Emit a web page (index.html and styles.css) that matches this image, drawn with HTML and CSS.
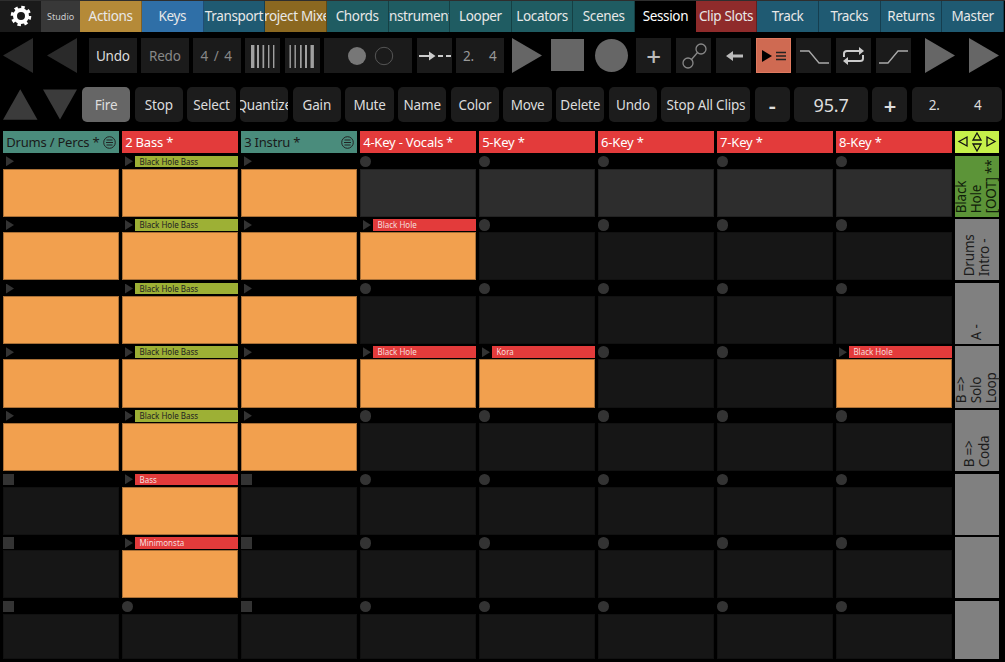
FILE: index.html
```html
<!DOCTYPE html>
<html lang="en">
<head>
  <meta charset="UTF-8">
  <meta name="viewport" content="width=device-width, initial-scale=1.0">
  <title>Session</title>
  <link rel="stylesheet" href="styles.css">
</head>
<body>
  <!-- Page tabs -->
  <div class="tabs">
    <div class="tab tab-gear">
      <svg width="22" height="22" viewBox="0 0 22 22">
        <circle cx="11" cy="11" r="6" fill="none" stroke="#fff" stroke-width="4"/>
        <circle cx="11" cy="11" r="8.8" fill="none" stroke="#fff" stroke-width="3" stroke-dasharray="3.450 3.460"/>
      </svg>
    </div>
    <div class="tab tab-studio">Studio</div>
    <div class="tab gold">Actions</div>
    <div class="tab blue">Keys</div>
    <div class="tab petrol">Transport</div>
    <div class="tab brown">Project Mixer</div>
    <div class="tab teal">Chords</div>
    <div class="tab teal">Instrument</div>
    <div class="tab teal">Looper</div>
    <div class="tab teal">Locators</div>
    <div class="tab teal">Scenes</div>
    <div class="tab current">Session</div>
    <div class="tab wine">Clip Slots</div>
    <div class="tab petrol">Track</div>
    <div class="tab petrol">Tracks</div>
    <div class="tab petrol">Returns</div>
    <div class="tab petrol">Master</div>
  </div>

  <!-- Transport row -->
  <div class="transport">
    <svg class="shape w30" viewBox="0 0 30 35"><polygon points="30,0 30,35 0,17.500" fill="#2a2a2a"/></svg>
    <svg class="shape w30 gap-back" viewBox="0 0 30 35"><polygon points="30,0 30,35 0,17.500" fill="#2a2a2a"/></svg>
    <div class="tbtn w48 gap-undo">Undo</div>
    <div class="tbtn w48 dim">Redo</div>
    <div class="tbtn w48 dim sig">4 / 4</div>
    <div class="tbtn w35">
      <svg width="35" height="35" viewBox="0 0 35 35" fill="#a0a0a0"><rect x="6" y="7" width="3.400" height="23"/><rect x="12" y="7" width="2" height="23"/><rect x="17.500" y="7" width="1.700" height="23"/><rect x="23" y="7" width="1.400" height="23"/><rect x="28" y="7" width="1.400" height="23"/></svg>
    </div>
    <div class="tbtn w35">
      <svg width="35" height="35" viewBox="0 0 35 35" fill="#a0a0a0"><rect x="4.500" y="7" width="1.400" height="23"/><rect x="9.500" y="7" width="1.400" height="23"/><rect x="15" y="7" width="1.700" height="23"/><rect x="20" y="7" width="2" height="23"/><rect x="25.500" y="7" width="3.400" height="23"/></svg>
    </div>
    <div class="tbtn w88">
      <svg width="88" height="35" viewBox="0 0 88 35"><circle cx="33" cy="18" r="9" fill="#777"/><circle cx="60" cy="18" r="8.700" fill="none" stroke="#555"/></svg>
    </div>
    <div class="tbtn w35">
      <svg width="35" height="35" viewBox="0 0 35 35" fill="#ccc"><path d="M2 17H12V13.500L18.500 18L12 22.500V19H2Z"/><path d="M21 17H26V19H21ZM29 17H34V19H29Z"/></svg>
    </div>
    <div class="tbtn w48 num"><span>2.</span><span>4</span></div>
    <svg class="shape w30 gap-play" viewBox="0 0 30 35"><polygon points="0,0 30,17.500 0,35" fill="#666"/></svg>
    <div class="stopshape"></div>
    <div class="recshape"></div>
    <div class="tbtn wide gap-plus plus">+</div>
    <div class="tbtn wide">
      <svg width="35" height="35" viewBox="0 0 35 35" fill="none" stroke="#888" stroke-width="1.300"><circle cx="12" cy="25" r="5"/><circle cx="25" cy="11" r="5"/><path d="M15.500 21.500L21.500 14.500"/></svg>
    </div>
    <div class="tbtn wide">
      <svg width="35" height="35" viewBox="0 0 35 35" fill="#bbb"><path d="M10 18L17 13V16.500H27V19.500H17V23Z"/></svg>
    </div>
    <div class="tbtn wide on">
      <svg width="35" height="35" viewBox="0 0 35 35"><polygon points="6,12 16,18 6,24" fill="#000"/><path d="M20 14.500H30M20 18H30M20 21.500H30" stroke="#222" stroke-width="1.400"/></svg>
    </div>
    <div class="tbtn wide">
      <svg width="35" height="35" viewBox="0 0 35 35" fill="none" stroke="#aaa" stroke-width="1.300"><path d="M4 13H13L23 25H33"/></svg>
    </div>
    <div class="tbtn wide">
      <svg width="35" height="35" viewBox="0 0 35 35" fill="none" stroke="#ccc" stroke-width="2"><path d="M8 19V15.500Q8 13 11 13H24"/><path d="M27 17V20.500Q27 23 24 23H11"/><path d="M23 9L28 13L23 17Z" fill="#ccc" stroke="none"/><path d="M12 19L7 23L12 27Z" fill="#ccc" stroke="none"/></svg>
    </div>
    <div class="tbtn wide">
      <svg width="35" height="35" viewBox="0 0 35 35" fill="none" stroke="#aaa" stroke-width="1.300"><path d="M3 25H12L22 13H32"/></svg>
    </div>
    <svg class="shape w30 gap-end" viewBox="0 0 30 35"><polygon points="0,0 30,17.500 0,35" fill="#666"/></svg>
    <svg class="shape w30 gap-end" viewBox="0 0 30 35"><polygon points="0,0 30,17.500 0,35" fill="#666"/></svg>
  </div>

  <!-- Action row -->
  <div class="actions">
    <svg class="arrow" viewBox="0 0 35 31"><polygon points="17.500,0 35,31 0,31" fill="#3b3b3b"/></svg>
    <svg class="arrow" viewBox="0 0 35 31"><polygon points="0,0 35,0 17.500,31" fill="#3b3b3b"/></svg>
    <div class="abtn fire">Fire</div>
    <div class="abtn">Stop</div>
    <div class="abtn">Select</div>
    <div class="abtn">Quantize</div>
    <div class="abtn">Gain</div>
    <div class="abtn">Mute</div>
    <div class="abtn">Name</div>
    <div class="abtn">Color</div>
    <div class="abtn">Move</div>
    <div class="abtn">Delete</div>
    <div class="abtn">Undo</div>
    <div class="abtn stopall">Stop All Clips</div>
    <div class="abtn step">-</div>
    <div class="abtn tempo">95.7</div>
    <div class="abtn step">+</div>
    <div class="abtn quant"><span>2.</span><span>4</span></div>
  </div>

  <!-- Clip matrix -->
  <div class="matrix">
    <div class="thead th-teal">Drums / Percs *
      <svg class="menu" width="13" height="13" viewBox="0 0 13 13" fill="none" stroke="#222"><circle cx="6.500" cy="6.500" r="5.800"/><path d="M3.500 4H9.500M3 6.500H10M3.500 9H9.500"/></svg>
    </div>
    <div class="thead th-red">2 Bass *</div>
    <div class="thead th-teal">3 Instru *
      <svg class="menu" width="13" height="13" viewBox="0 0 13 13" fill="none" stroke="#222"><circle cx="6.500" cy="6.500" r="5.800"/><path d="M3.500 4H9.500M3 6.500H10M3.500 9H9.500"/></svg>
    </div>
    <div class="thead th-red">4-Key - Vocals *</div>
    <div class="thead th-red">5-Key *</div>
    <div class="thead th-red">6-Key *</div>
    <div class="thead th-red">7-Key *</div>
    <div class="thead th-red">8-Key *</div>
    <div class="navpad">
      <svg width="44" height="22" viewBox="0 0 44 22" fill="none" stroke="#111" stroke-width="1.300"><path d="M12 6V15L4 10.500Z"/><path d="M22 2L26 9H18Z"/><path d="M18 13H26L22 20Z"/><path d="M32 6V15L40 10.500Z"/></svg>
    </div>

    <!-- row 1 -->
    <div class="slot"><div class="state"><i class="play"></i></div><div class="clip full"></div></div>
    <div class="slot"><div class="state"><i class="play"></i><span class="name lime">Black Hole Bass</span></div><div class="clip full"></div></div>
    <div class="slot"><div class="state"><i class="play"></i></div><div class="clip full"></div></div>
    <div class="slot"><div class="state"><i class="rec"></i></div><div class="clip lit"></div></div>
    <div class="slot"><div class="state"><i class="rec"></i></div><div class="clip lit"></div></div>
    <div class="slot"><div class="state"><i class="rec"></i></div><div class="clip lit"></div></div>
    <div class="slot"><div class="state"><i class="rec"></i></div><div class="clip lit"></div></div>
    <div class="slot"><div class="state"><i class="rec"></i></div><div class="clip lit"></div></div>
    <div class="scene scene-on"><span>Black<br>Hole<br>[OOT] **</span></div>

    <!-- row 2 -->
    <div class="slot"><div class="state"><i class="play"></i></div><div class="clip full"></div></div>
    <div class="slot"><div class="state"><i class="play"></i><span class="name lime">Black Hole Bass</span></div><div class="clip full"></div></div>
    <div class="slot"><div class="state"><i class="play"></i></div><div class="clip full"></div></div>
    <div class="slot"><div class="state"><i class="play"></i><span class="name red">Black Hole</span></div><div class="clip full"></div></div>
    <div class="slot"><div class="state"><i class="rec"></i></div><div class="clip"></div></div>
    <div class="slot"><div class="state"><i class="rec"></i></div><div class="clip"></div></div>
    <div class="slot"><div class="state"><i class="rec"></i></div><div class="clip"></div></div>
    <div class="slot"><div class="state"><i class="rec"></i></div><div class="clip"></div></div>
    <div class="scene"><span>Drums<br>Intro -</span></div>

    <!-- row 3 -->
    <div class="slot"><div class="state"><i class="play"></i></div><div class="clip full"></div></div>
    <div class="slot"><div class="state"><i class="play"></i><span class="name lime">Black Hole Bass</span></div><div class="clip full"></div></div>
    <div class="slot"><div class="state"><i class="play"></i></div><div class="clip full"></div></div>
    <div class="slot"><div class="state"><i class="rec"></i></div><div class="clip"></div></div>
    <div class="slot"><div class="state"><i class="rec"></i></div><div class="clip"></div></div>
    <div class="slot"><div class="state"><i class="rec"></i></div><div class="clip"></div></div>
    <div class="slot"><div class="state"><i class="rec"></i></div><div class="clip"></div></div>
    <div class="slot"><div class="state"><i class="rec"></i></div><div class="clip"></div></div>
    <div class="scene"><span>A -</span></div>

    <!-- row 4 -->
    <div class="slot"><div class="state"><i class="play"></i></div><div class="clip full"></div></div>
    <div class="slot"><div class="state"><i class="play"></i><span class="name lime">Black Hole Bass</span></div><div class="clip full"></div></div>
    <div class="slot"><div class="state"><i class="play"></i></div><div class="clip full"></div></div>
    <div class="slot"><div class="state"><i class="play"></i><span class="name red">Black Hole</span></div><div class="clip full"></div></div>
    <div class="slot"><div class="state"><i class="play"></i><span class="name red">Kora</span></div><div class="clip full"></div></div>
    <div class="slot"><div class="state"><i class="rec"></i></div><div class="clip"></div></div>
    <div class="slot"><div class="state"><i class="rec"></i></div><div class="clip"></div></div>
    <div class="slot"><div class="state"><i class="play"></i><span class="name red">Black Hole</span></div><div class="clip full"></div></div>
    <div class="scene"><span>B =&gt;<br>Solo<br>Loop</span></div>

    <!-- row 5 -->
    <div class="slot"><div class="state"><i class="play"></i></div><div class="clip full"></div></div>
    <div class="slot"><div class="state"><i class="play"></i><span class="name lime">Black Hole Bass</span></div><div class="clip full"></div></div>
    <div class="slot"><div class="state"><i class="play"></i></div><div class="clip full"></div></div>
    <div class="slot"><div class="state"><i class="rec"></i></div><div class="clip"></div></div>
    <div class="slot"><div class="state"><i class="rec"></i></div><div class="clip"></div></div>
    <div class="slot"><div class="state"><i class="rec"></i></div><div class="clip"></div></div>
    <div class="slot"><div class="state"><i class="rec"></i></div><div class="clip"></div></div>
    <div class="slot"><div class="state"><i class="rec"></i></div><div class="clip"></div></div>
    <div class="scene"><span>B =&gt;<br>Coda</span></div>

    <!-- row 6 -->
    <div class="slot"><div class="state"><i class="halt"></i></div><div class="clip"></div></div>
    <div class="slot"><div class="state"><i class="play"></i><span class="name red">Bass</span></div><div class="clip full"></div></div>
    <div class="slot"><div class="state"><i class="halt"></i></div><div class="clip"></div></div>
    <div class="slot"><div class="state"><i class="rec"></i></div><div class="clip"></div></div>
    <div class="slot"><div class="state"><i class="rec"></i></div><div class="clip"></div></div>
    <div class="slot"><div class="state"><i class="rec"></i></div><div class="clip"></div></div>
    <div class="slot"><div class="state"><i class="rec"></i></div><div class="clip"></div></div>
    <div class="slot"><div class="state"><i class="rec"></i></div><div class="clip"></div></div>
    <div class="scene"></div>

    <!-- row 7 -->
    <div class="slot"><div class="state"><i class="halt"></i></div><div class="clip"></div></div>
    <div class="slot"><div class="state"><i class="play"></i><span class="name red">Minimonsta</span></div><div class="clip full"></div></div>
    <div class="slot"><div class="state"><i class="halt"></i></div><div class="clip"></div></div>
    <div class="slot"><div class="state"><i class="rec"></i></div><div class="clip"></div></div>
    <div class="slot"><div class="state"><i class="rec"></i></div><div class="clip"></div></div>
    <div class="slot"><div class="state"><i class="rec"></i></div><div class="clip"></div></div>
    <div class="slot"><div class="state"><i class="rec"></i></div><div class="clip"></div></div>
    <div class="slot"><div class="state"><i class="rec"></i></div><div class="clip"></div></div>
    <div class="scene"></div>

    <!-- row 8 -->
    <div class="slot"><div class="state"><i class="halt"></i></div><div class="clip"></div></div>
    <div class="slot"><div class="state"><i class="rec"></i></div><div class="clip"></div></div>
    <div class="slot"><div class="state"><i class="halt"></i></div><div class="clip"></div></div>
    <div class="slot"><div class="state"><i class="rec"></i></div><div class="clip"></div></div>
    <div class="slot"><div class="state"><i class="rec"></i></div><div class="clip"></div></div>
    <div class="slot"><div class="state"><i class="rec"></i></div><div class="clip"></div></div>
    <div class="slot"><div class="state"><i class="rec"></i></div><div class="clip"></div></div>
    <div class="slot"><div class="state"><i class="rec"></i></div><div class="clip"></div></div>
    <div class="scene"></div>
  </div>
</body>
</html>
```
FILE: styles.css
```css
html, body {
  height: 662px;
  overflow: hidden;
}

body {
  margin: 0;
  background: #000;
  color: #ddd;
  font-family: "Noto Sans", "Open Sans", sans-serif;
  font-size: 13.500px;
  letter-spacing: -0.2px;
}

/* Page tabs */
.tabs {
  display: flex;
  height: 30.700px;
  border-top: 1px solid #2e2e2e;
  padding-right: 1px;
  letter-spacing: -0.35px;
}

.tab {
  flex: 1 1 0;
  min-width: 0;
  display: flex;
  align-items: center;
  justify-content: center;
  white-space: nowrap;
  overflow: hidden;
  color: #e8e8e8;
  border-right: 1px solid rgba(0, 0, 0, 0.3);
}

.tab-gear {
  flex: 0 0 41px;
  background: #1a1a1a;
  border: 0;
}

.tab-studio {
  flex: 0 0 39.300px;
  background: #383838;
  font-size: 9px;
  letter-spacing: 0;
  color: #ccc;
  border: 0;
}

.gold { background: #b58a38; }
.blue { background: #2f6fa7; }
.brown { background: #8b6820; }
.teal { background: #1f5c62; }
.petrol { background: #1f5a72; }
.wine { background: #8f2b2b; }
.current { background: #000; color: #fff; border: 0; }

/* Transport row */
.transport {
  display: flex;
  gap: 4.500px;
  height: 35px;
  margin-top: 6.600px;
  padding-left: 3.300px;
}

.shape {
  height: 35px;
  flex: none;
}

.w30 { width: 30px; }
.w35 { width: 35px; }
.w48 { width: 47.500px; }
.w88 { width: 88px; }
.wide { width: 35.500px; }

.gap-back { margin-left: 9.500px; }
.gap-undo { margin-left: 7.300px; }
.gap-play { margin-left: 3.700px; }
.gap-plus { margin-left: 3.200px; }
.gap-end { margin-left: 9.500px; }

.tbtn {
  flex: none;
  display: flex;
  align-items: center;
  justify-content: center;
  background: #1b1b1b;
  color: #ddd;
}

.tbtn.dim { color: #888; }
.tbtn.sig { letter-spacing: 1px; }
.tbtn.on { background: #cf6a52; outline: 1px solid #e07a60; outline-offset: -1px; }
.tbtn.plus { font-size: 26px; font-weight: 500; color: #bbb; }

.tbtn.num {
  justify-content: space-between;
  padding: 0 7px;
  box-sizing: border-box;
  color: #999;
}

.stopshape {
  flex: none;
  width: 32.400px;
  height: 32.400px;
  margin: 0.700px 0 0 5px;
  background: #666;
}

.recshape {
  flex: none;
  width: 33px;
  height: 33px;
  margin: 0.500px 0 0 7px;
  border-radius: 50%;
  background: #666;
}

/* Action row */
.actions {
  display: flex;
  gap: 4.300px;
  height: 35.300px;
  margin-top: 13.700px;
  padding-left: 3.300px;
}

.arrow {
  flex: none;
  width: 34.500px;
  height: 31px;
  margin-top: 2.500px;
}

.arrow + .arrow { margin-left: 1px; width: 34px; }
.arrow + .arrow + .abtn { margin-left: 0.500px; }

.abtn {
  flex: none;
  width: 48.400px;
  display: flex;
  align-items: center;
  justify-content: center;
  white-space: nowrap;
  overflow: hidden;
  background: #1c1c1c;
  border-radius: 5px;
  color: #ddd;
}

.abtn.fire { background: #666; }
.abtn.stopall { width: 89px; }
.abtn.step { width: 35px; font-size: 22px; font-weight: 600; }
.abtn.tempo { width: 74px; font-size: 18px; }

.abtn.quant {
  width: 90px;
  justify-content: space-between;
  padding: 0 20px 0 17px;
  box-sizing: border-box;
}

/* Clip matrix */
.matrix {
  display: grid;
  grid-template-columns: repeat(8, 116.600px) 44.300px;
  grid-template-rows: 22.300px repeat(7, 61.300px) 58.700px;
  column-gap: 2.400px;
  row-gap: 2.300px;
  margin-top: 8.700px;
  padding-left: 2.700px;
}

.thead {
  display: flex;
  align-items: center;
  justify-content: space-between;
  padding: 0 3.500px;
  white-space: nowrap;
  overflow: hidden;
  font-size: 13px;
}

.th-teal { background: #4a8c7c; color: #1a1a1a; }
.th-red { background: #e33b3b; color: #fff; }

.menu { flex: none; }

.navpad {
  background: #c6f04a;
  display: flex;
  align-items: center;
  justify-content: center;
}

.slot {
  display: flex;
  flex-direction: column;
  gap: 1.400px;
}

.state {
  display: flex;
  align-items: center;
  height: 11.600px;
  flex: none;
}

.state i {
  flex: none;
  display: block;
  background: #333;
}

.play {
  width: 8px;
  height: 10px;
  margin-left: 3.300px;
  clip-path: polygon(0 0, 100% 50%, 0 100%);
}

.rec {
  width: 11.600px;
  height: 11.600px;
  border-radius: 50%;
}

.halt {
  width: 11.600px;
  height: 11.600px;
}

.name {
  flex: 1;
  align-self: stretch;
  margin-left: 2px;
  padding-left: 4.500px;
  font-size: 8px;
  letter-spacing: 0;
  line-height: 11.600px;
  white-space: nowrap;
}

.name.lime { background: #9db035; color: #222; }
.name.red { background: #e33b3b; color: #f5dede; }

.clip {
  flex: 1;
  background: #161616;
  box-sizing: border-box;
  border: 1px solid #111;
}

.clip.lit { background: #2d2d2d; border-color: #222; }
.clip.full { background: #f2a04e; border-color: #a86f36; }

.scene {
  display: flex;
  align-items: center;
  justify-content: center;
  background: #808080;
  color: #1c1c1c;
  line-height: 15px;
}

.scene-on {
  background: #5c9438;
  color: #10200a;
}

.scene span {
  writing-mode: vertical-rl;
  transform: rotate(180deg);
  white-space: nowrap;
  padding-top: 4px;
  box-sizing: border-box;
  height: 100%;
}
```
